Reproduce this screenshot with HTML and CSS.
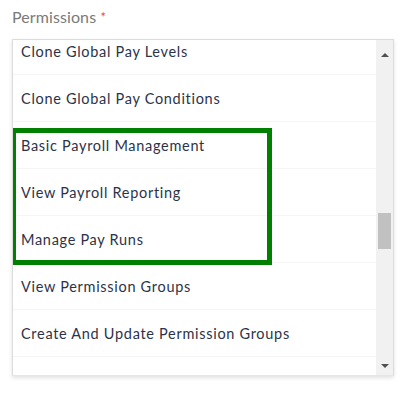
FILE: index.html
```html
<!DOCTYPE html>
<html>
<head>
<meta charset="utf-8">
<link rel="stylesheet" href="styles.css">
</head>
<body>
<div class="field">
  <div class="label">Permissions <span class="req">*</span></div>
  <div class="select">
    <div class="viewport">
      <ul class="options">
        <li>Clone Global Pay Levels</li>
        <li>Clone Global Pay Conditions</li>
        <li>Basic Payroll Management</li>
        <li>View Payroll Reporting</li>
        <li>Manage Pay Runs</li>
        <li>View Permission Groups</li>
        <li>Create And Update Permission Groups</li>
        <li></li>
      </ul>
      <div class="highlight"></div>
    </div>
    <div class="scrollbar">
      <div class="btn up"><span class="tri-up"></span></div>
      <div class="track"><div class="thumb"></div></div>
      <div class="btn down"><span class="tri-down"></span></div>
    </div>
  </div>
</div>
</body>
</html>
```

FILE: styles.css
```css
* { box-sizing: border-box; }
html, body { margin: 0; padding: 0; background: #fff; }
body {
  width: 401px;
  height: 393px;
  overflow: hidden;
  font-family: "Lato", "Noto Sans", sans-serif;
}
.field {
  padding: 8px 8px 0 12px;
}
.label {
  font-size: 16px;
  color: #7a7a7a;
  height: 31px;
  line-height: 18px;
  letter-spacing: 0.1px;
}
.req { color: #e8465a; font-size: 13px; vertical-align: top; }
.select {
  width: 382px;
  height: 337px;
  border: 1px solid #dcdcdc;
  border-bottom-color: #e6e6e6;
  box-shadow: 0 2px 4px rgba(0,0,0,0.12);
  display: flex;
  background: #fff;
}
.viewport {
  flex: 1;
  position: relative;
  overflow: hidden;
}
.options {
  list-style: none;
  margin: -12px 0 0 0;
  padding: 0;
}
.options li {
  height: 47px;
  border-bottom: 1px solid #f5f5f5;
  padding-left: 8px;
  display: flex;
  align-items: center;
  font-size: 14.5px;
  color: #2c3349;
  letter-spacing: 0.7px;
  white-space: nowrap;
}
.highlight {
  position: absolute;
  left: -2px;
  top: 88px;
  width: 261px;
  height: 137px;
  border: 5px solid #008000;
}
.scrollbar {
  width: 17px;
  background: #f1f1f1;
  display: flex;
  flex-direction: column;
}
.btn {
  display: flex;
  justify-content: center;
}
.btn.up { height: 29px; align-items: flex-end; padding-bottom: 12px; }
.btn.down { height: 18px; align-items: center; }
.tri-up {
  width: 0; height: 0;
  border-left: 4px solid transparent;
  border-right: 4px solid transparent;
  border-bottom: 4px solid #505050;
}
.tri-down {
  width: 0; height: 0;
  border-left: 4px solid transparent;
  border-right: 4px solid transparent;
  border-top: 4px solid #505050;
}
.track { flex: 1; padding: 0 2px; }
.thumb {
  margin-top: 144px;
  height: 36px;
  background: #c1c1c1;
}
```
